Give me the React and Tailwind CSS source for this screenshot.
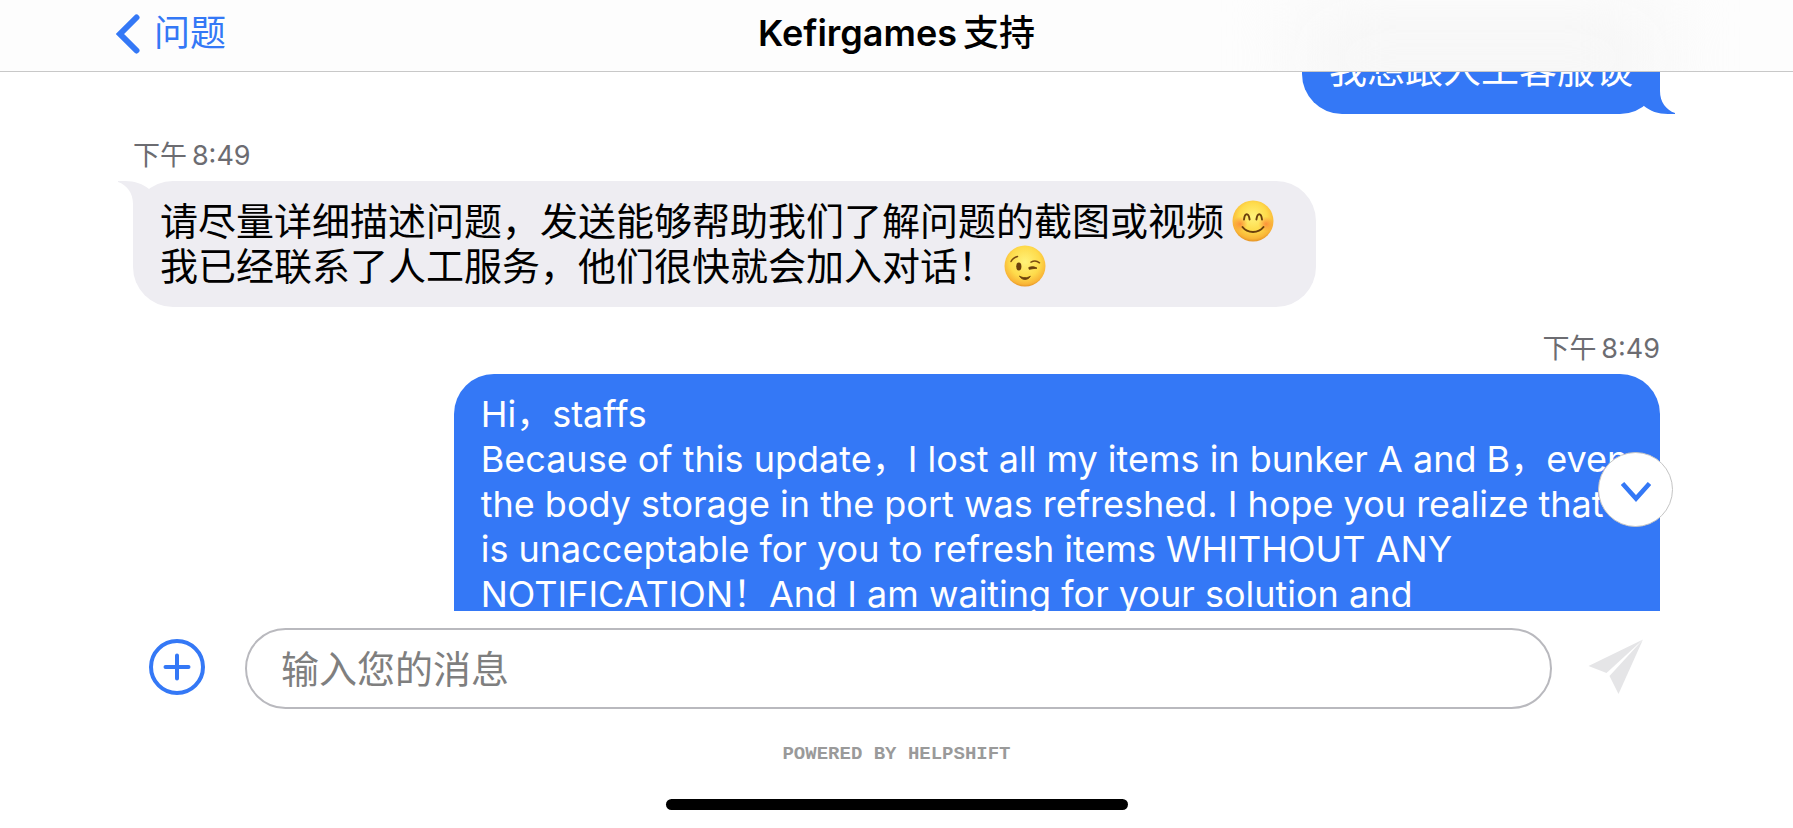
import React, { useLayoutEffect, useRef, useState } from 'react';

const INITIAL_SCROLL = 43;

const SmileEmoji = () => (
  <svg role="img" aria-label="smiling face" viewBox="0 0 42 42" className="inline-block w-[42px] h-[42px] ml-2 -mt-2 align-[-7px]">
    <defs>
      <radialGradient id="smile-face" cx="0.5" cy="0.4" r="0.62">
        <stop offset="0" stopColor="#fff27a" />
        <stop offset="0.55" stopColor="#fedb4b" />
        <stop offset="0.85" stopColor="#f9b537" />
        <stop offset="1" stopColor="#e08a1f" />
      </radialGradient>
      <radialGradient id="smile-blush">
        <stop offset="0" stopColor="#fb7a35" stopOpacity="0.75" />
        <stop offset="1" stopColor="#fb7a35" stopOpacity="0" />
      </radialGradient>
    </defs>
    <circle cx="21" cy="21" r="20.5" fill="url(#smile-face)" />
    <circle cx="8" cy="24" r="7.5" fill="url(#smile-blush)" />
    <circle cx="34" cy="24" r="7.5" fill="url(#smile-blush)" />
    <path d="M12 19.5C12.8 12.5 16.6 12.5 17.6 19.5M24.4 19.5C25.4 12.5 29.2 12.5 30 19.5" fill="none" stroke="#6b3f0c" strokeWidth="1.9" strokeLinecap="round" />
    <path d="M10.5 27C15.5 33.5 26.5 33.5 31.5 27" fill="none" stroke="#6b3f0c" strokeWidth="2" strokeLinecap="round" />
  </svg>
);

const WinkEmoji = () => (
  <svg role="img" aria-label="winking face" viewBox="0 0 42 42" className="inline-block w-[42px] h-[42px] ml-2 -mt-2 align-[-7px]">
    <defs>
      <radialGradient id="wink-face" cx="0.5" cy="0.4" r="0.62">
        <stop offset="0" stopColor="#fff27a" />
        <stop offset="0.6" stopColor="#fedb4b" />
        <stop offset="0.88" stopColor="#f9b537" />
        <stop offset="1" stopColor="#e08a1f" />
      </radialGradient>
    </defs>
    <circle cx="21" cy="21" r="20.5" fill="url(#wink-face)" />
    <path d="M7 16.5C8.5 13.5 10.5 12.2 13.5 11.5M27 17.2C30 15.5 33 15.8 35.5 17.8" fill="none" stroke="#7a4a10" strokeWidth="1.5" strokeLinecap="round" />
    <ellipse cx="14.8" cy="21.5" rx="2.6" ry="4" fill="#6b3f0c" />
    <path d="M24.8 22.5C27.5 21.3 30.5 21.5 33 23.2C30.5 23.5 27.5 23.7 25.2 24.3Z" fill="#6b3f0c" stroke="#6b3f0c" strokeWidth="0.9" strokeLinejoin="round" />
    <path d="M15.5 31C18.5 33.2 23.5 33.2 26.3 31.2C24 35.6 17.8 35.6 15.5 31Z" fill="#6b3f0c" stroke="#6b3f0c" strokeWidth="0.9" strokeLinejoin="round" />
  </svg>
);

// Drawn for the bottom right corner, flipped for received messages
const Tail = ({ className }) => (
  <svg viewBox="0 0 31 44" aria-hidden="true" className={`absolute w-[31px] h-[44px] ${className}`}>
    <path d="M0 0H16V21C16 32 22 40 31 43V44H24C14 44 6 41 0 36Z" fill="currentColor" />
  </svg>
);

const Received = ({ children }) => (
  <div className="relative shrink-0 self-start min-w-[77.5%] rounded-[40px] bg-[#eeedf2] px-[27px] py-[18px] text-[38px] leading-[45px] text-black">
    <Tail className="-left-[15px] top-0 rotate-180 text-[#eeedf2]" />
    {children}
  </div>
);

const Sent = ({ tail, className, children }) => (
  <div className={`relative shrink-0 self-end rounded-[40px] bg-[#3478f6] px-[27px] pt-[18px] pb-[22px] leading-[45px] text-white ${className}`}>
    {tail && <Tail className="-right-[15px] bottom-0 text-[#3478f6]" />}
    {children}
  </div>
);

const Time = ({ className, children }) => (
  <time dateTime="20:49" className={`shrink-0 mt-[26px] mb-[9px] text-[27px] leading-8 text-[#6c6c71] ${className}`}>
    {children}
  </time>
);

const update = `Hi，staffs
Because of this update，I lost all my items in bunker A and B，even
the body storage in the port was refreshed. I hope you realize that it
is unacceptable for you to refresh items WHITHOUT ANY
NOTIFICATION！And I am waiting for your solution and`;

export default function App() {
  const listRef = useRef(null);
  const [message, setMessage] = useState('');

  useLayoutEffect(() => {
    listRef.current.scrollTop = INITIAL_SCROLL;
  }, []);

  const scrollToEnd = () => {
    listRef.current.scrollTo({ top: listRef.current.scrollHeight, behavior: 'smooth' });
  };

  return (
    <div className="h-screen flex flex-col overflow-hidden bg-white font-[Inter,'Noto_Sans_CJK_SC',sans-serif]" lang="zh-CN">
      <header className="relative shrink-0 grid grid-cols-[1fr_auto_1fr] items-center h-[72px] px-[116px] pb-1 overflow-hidden border-b border-[#c8c8c8] bg-[#fdfdfd]">
        <div aria-hidden="true" className="absolute top-3 -bottom-8 right-[133px] w-[359px] bg-[#f5f5f5] blur-2xl" />
        <button type="button" className="relative justify-self-start flex items-center gap-3.5 text-[36px] leading-[45px] text-[#3478f6]">
          <svg viewBox="0 0 24 40" aria-hidden="true" className="w-6 h-10">
            <path d="M20.5 3.5L4 20L20.5 36.5" fill="none" stroke="currentColor" strokeWidth="6" strokeLinecap="round" />
          </svg>
          问题
        </button>
        <h1 className="relative text-[36px] leading-[45px] font-semibold text-black">
          Kefirgames{'\u2009'}<span className="font-medium">支持</span>
        </h1>
      </header>

      <main className="relative flex-1 min-h-0">
        <div ref={listRef} className="h-full flex flex-col overflow-y-auto px-[133px] [scrollbar-width:none]">
          <Sent tail className="text-[38px]">我想跟人工客服谈</Sent>
          <Time className="self-start">下午{'\u2009'}8:49</Time>
          <Received>
            <p>请尽量详细描述问题，发送能够帮助我们了解问题的截图或视频<SmileEmoji /></p>
            <p>我已经联系了人工服务，他们很快就会加入对话！<WinkEmoji /></p>
          </Received>
          <Time className="self-end">下午{'\u2009'}8:49</Time>
          <Sent className="w-[79%] min-h-80 whitespace-pre text-[36px]">{update}</Sent>
        </div>
        <button
          type="button"
          aria-label="滚动到底部"
          onClick={scrollToEnd}
          className="absolute right-[120px] bottom-[84px] flex items-center justify-center w-[75px] h-[75px] rounded-full border border-[#c4c4c4] bg-white text-[#3478f6]"
        >
          <svg viewBox="0 0 30 20" aria-hidden="true" className="w-[30px] h-5 mt-1">
            <path d="M1.5 1.5L15 16.5L28.5 1.5" fill="none" stroke="currentColor" strokeWidth="4.6" />
          </svg>
        </button>
      </main>

      <footer className="shrink-0 flex flex-col items-center pb-[18px]">
        <form onSubmit={(e) => e.preventDefault()} className="w-full flex items-center pt-[17px] px-[149px]">
          <button type="button" aria-label="添加附件" className="mb-1 text-[#3478f6]">
            <svg viewBox="0 0 56 56" aria-hidden="true" className="w-14 h-14">
              <circle cx="28" cy="28" r="26" fill="none" stroke="currentColor" strokeWidth="4" />
              <path d="M28 16.5V39.5M16.5 28H39.5" fill="none" stroke="currentColor" strokeWidth="4" strokeLinecap="round" />
            </svg>
          </button>
          <input
            type="text"
            aria-label="输入您的消息"
            placeholder="输入您的消息"
            value={message}
            onChange={(e) => setMessage(e.target.value)}
            className="flex-1 min-w-0 h-[81px] ml-10 mr-9 px-[34px] rounded-full border-2 border-[#b9b9be] bg-white text-[38px] text-black placeholder:text-[#7f7f7f] outline-none"
          />
          <button type="submit" aria-label="发送" className="mb-1 text-[#e5e5e7]">
            <svg viewBox="0 0 56 56" aria-hidden="true" className="w-14 h-14">
              <path d="M0.5 27L55 0.5L18.5 34Z" fill="currentColor" />
              <path d="M55 0.5L30.5 55L21.5 37Z" fill="currentColor" />
            </svg>
          </button>
        </form>
        <p className="mt-[33px] font-['Liberation_Mono',monospace] font-bold text-[19px] leading-6 text-[#9a9a9a]">POWERED BY HELPSHIFT</p>
        <div className="mt-[33px] w-[462px] h-[11px] rounded-full bg-black" />
      </footer>
    </div>
  );
}
